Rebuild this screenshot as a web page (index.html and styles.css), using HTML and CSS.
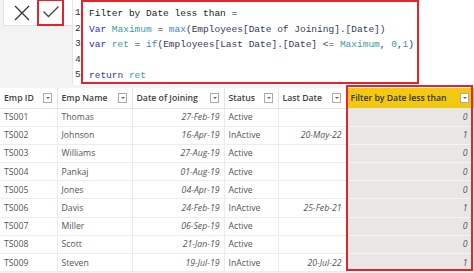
FILE: index.html
```html
<!DOCTYPE html>
<html lang="en">
<head>
    <meta charset="UTF-8">
    <title>Filter by Date less than</title>
    <link rel="stylesheet" href="styles.css">
</head>
<body>
    <div class="bar">
        <div class="btns">
            <span class="btn">
                <svg width="16" height="16" viewBox="0 0 16 16"><path d="M1 1L15 15M15 1L1 15" stroke="#333" stroke-width="1.3" fill="none"/></svg>
            </span>
            <span class="btn ok">
                <svg width="16" height="12" viewBox="0 0 16 12"><path d="M0.5 5.5L5.5 10.5L15.5 0.5" stroke="#444" stroke-width="1.3" fill="none"/></svg>
            </span>
        </div>
        <div class="editor">
            <div class="gutter">
                <div class="ln">1</div>
                <div class="ln">2</div>
                <div class="ln">3</div>
                <div class="ln">4</div>
                <div class="ln">5</div>
            </div>
            <div class="code">
                <div class="ln">Filter by Date less than =</div>
                <div class="ln"><span class="kw">Var</span> <span class="vr">Maximum</span> = <span class="fn">max</span><span class="rf">(Employees[Date of Joining].[Date])</span></div>
                <div class="ln"><span class="kw">var</span> <span class="vr">ret</span> = <span class="fn">if</span><span class="rf">(Employees[Last Date].[Date] &lt;= </span><span class="vr">Maximum</span><span class="rf">, </span><span class="nm">0</span><span class="rf">,</span><span class="nm">1</span><span class="rf">)</span></div>
                <div class="ln">&nbsp;</div>
                <div class="ln"><span class="kw">return</span> <span class="vr">ret</span></div>
            </div>
        </div>
    </div>
    <div class="grid">
        <table>
            <colgroup>
                <col class="c1"><col class="c2"><col class="c3"><col class="c4"><col class="c5"><col class="c6">
            </colgroup>
            <thead>
                <tr>
                    <th><div class="hd">Emp ID<span class="dd"></span></div></th>
                    <th><div class="hd">Emp Name<span class="dd"></span></div></th>
                    <th><div class="hd">Date of Joining<span class="dd"></span></div></th>
                    <th><div class="hd">Status<span class="dd"></span></div></th>
                    <th><div class="hd">Last Date<span class="dd"></span></div></th>
                    <th class="sel"><div class="hd">Filter by Date less than<span class="dd"></span></div></th>
                </tr>
            </thead>
            <tbody>
                <tr><td>TS001</td><td>Thomas</td><td class="dt">27-Feb-19</td><td>Active</td><td class="dt"></td><td class="fv">0</td></tr>
                <tr><td>TS002</td><td>Johnson</td><td class="dt">16-Apr-19</td><td>InActive</td><td class="dt">20-May-22</td><td class="fv">1</td></tr>
                <tr><td>TS003</td><td>Williams</td><td class="dt">27-Aug-19</td><td>Active</td><td class="dt"></td><td class="fv">0</td></tr>
                <tr><td>TS004</td><td>Pankaj</td><td class="dt">01-Aug-19</td><td>Active</td><td class="dt"></td><td class="fv">0</td></tr>
                <tr><td>TS005</td><td>Jones</td><td class="dt">04-Apr-19</td><td>Active</td><td class="dt"></td><td class="fv">0</td></tr>
                <tr><td>TS006</td><td>Davis</td><td class="dt">24-Feb-19</td><td>InActive</td><td class="dt">25-Feb-21</td><td class="fv">1</td></tr>
                <tr><td>TS007</td><td>Miller</td><td class="dt">06-Sep-19</td><td>Active</td><td class="dt"></td><td class="fv">0</td></tr>
                <tr><td>TS008</td><td>Scott</td><td class="dt">21-Jan-19</td><td>Active</td><td class="dt"></td><td class="fv">0</td></tr>
                <tr><td>TS009</td><td>Steven</td><td class="dt">19-Jul-19</td><td>InActive</td><td class="dt">20-Jul-22</td><td class="fv">1</td></tr>
            </tbody>
        </table>
        <div class="mark"></div>
    </div>
</body>
</html>
```

FILE: styles.css
```css
*{
    margin:0;
    padding:0;
    box-sizing:border-box;
}
body{
    background:#f3f3f3;
    font-family:"Open Sans", sans-serif;
    width:474px;
    height:273px;
    overflow:hidden;
}
.bar{
    display:flex;
    height:85px;
}
.btns{
    width:72px;
    height:26px;
    margin:0 0 0 3px;
    padding-left:8px;
    display:flex;
    align-items:center;
    gap:5px;
    background:#fff;
    border:1px solid #e2e2e2;
    border-top:0;
}
.btn{
    width:20px;
    height:20px;
    display:flex;
    align-items:center;
    justify-content:center;
}
.ok{
    width:27px;
    height:26px;
    border:2px solid #e0262b;
    border-top-width:1px;
}
.editor{
    flex:1;
    display:flex;
    background:#fff;
    margin-left:-3px;
    border-left:1px solid #e6e6e6;
    font-family:"Liberation Mono", monospace;
    font-size:9.5px;
    color:#222;
}
.gutter{
    width:8px;
    padding-top:5px;
    padding-left:2px;
    color:#333;
}
.ln{
    height:15.6px;
    line-height:15.6px;
    white-space:pre;
}
.code{
    width:338px;
    height:84px;
    padding:4px 0 0 6px;
    border:2px solid #e0262b;
}
.kw{ color:#3232c8; }
.vr{ color:#3a9c9c; }
.fn{ color:#4a7fc4; }
.rf{ color:#33395a; }
.nm{ color:#3a9c8c; }
.grid{
    position:relative;
    margin-top:3px;
    background:#fff;
}
table{
    border-collapse:collapse;
    table-layout:fixed;
    width:474px;
    font-size:8.7px;
    color:#555;
}
.c1{ width:57px; }
.c2{ width:75px; }
.c3{ width:92px; }
.c4{ width:54px; }
.c5{ width:68px; }
.c6{ width:128px; }
th{
    height:20px;
    text-align:left;
    font-weight:600;
    color:#404040;
    border-right:1px solid #e4e4e4;
    border-bottom:1px solid #e4e4e4;
}
.hd{
    display:flex;
    align-items:center;
    justify-content:space-between;
    padding:0 5px 0 4px;
    white-space:nowrap;
}
.dd{
    width:9px;
    height:10px;
    background:#fff;
    border:1px solid #aaa;
    position:relative;
}
.dd::after{
    content:"";
    position:absolute;
    left:2px;
    top:3px;
    border-left:2px solid transparent;
    border-right:2px solid transparent;
    border-top:2px solid #666;
}
th.sel{
    background:#f2c811;
    color:#333;
}
td{
    height:18.2px;
    padding:0 4px;
    white-space:nowrap;
    border-right:1px solid #ececec;
    border-bottom:1px solid #ececec;
}
.dt{
    text-align:right;
    font-style:italic;
}
td.fv{
    background:#e8e7e6;
    text-align:right;
    font-style:italic;
    padding-right:6px;
    border-bottom-color:#f4f4f4;
}
.mark{
    position:absolute;
    left:346px;
    top:-3px;
    width:127px;
    height:186px;
    border:2px solid #e0262b;
}
```
